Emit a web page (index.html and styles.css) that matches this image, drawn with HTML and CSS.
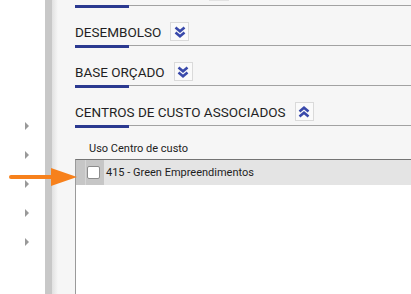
FILE: index.html
```html
<!DOCTYPE html>
<html>

<head>
    <meta charset="utf-8">
    <title>Centros de custo</title>
    <link rel="stylesheet" href="styles.css">
</head>

<body>
    <div class="page">
        <div class="side_menu">
            <div class="menu_item"><span class="menu_arrow"></span></div>
            <div class="menu_item"><span class="menu_arrow"></span></div>
            <div class="menu_item"><span class="menu_arrow"></span></div>
            <div class="menu_item"><span class="menu_arrow"></span></div>
            <div class="menu_item"><span class="menu_arrow"></span></div>
        </div>
        <div class="side_bar"></div>

        <div class="main_panel">
            <div class="prev_tail"><span class="toggle_stub"></span></div>
            <div class="section_rule"><span class="rule_mark"></span><span class="rule_line"></span></div>

            <div class="section_head">
                <span class="section_title">DESEMBOLSO</span>
                <button class="toggle">
                    <svg viewBox="0 0 12 12" width="12" height="12"><path d="M1.5 1.5 L6 5.2 L10.5 1.5 M1.5 6.5 L6 10.2 L10.5 6.5" /></svg>
                </button>
            </div>
            <div class="section_rule"><span class="rule_mark"></span><span class="rule_line"></span></div>

            <div class="section_head">
                <span class="section_title">BASE ORÇADO</span>
                <button class="toggle">
                    <svg viewBox="0 0 12 12" width="12" height="12"><path d="M1.5 1.5 L6 5.2 L10.5 1.5 M1.5 6.5 L6 10.2 L10.5 6.5" /></svg>
                </button>
            </div>
            <div class="section_rule"><span class="rule_mark"></span><span class="rule_line"></span></div>

            <div class="section_head">
                <span class="section_title">CENTROS DE CUSTO ASSOCIADOS</span>
                <button class="toggle">
                    <svg viewBox="0 0 12 12" width="12" height="12"><path d="M1.5 5.5 L6 1.8 L10.5 5.5 M1.5 10.5 L6 6.8 L10.5 10.5" /></svg>
                </button>
            </div>
            <div class="section_rule"><span class="rule_mark"></span><span class="rule_line"></span></div>

            <div class="grid_head">Uso Centro de custo</div>
            <div class="grid">
                <div class="grid_row">
                    <span class="cell_marker"></span>
                    <span class="cell_check"><span class="check_box"></span></span>
                    <span class="cell_text">415 - Green Empreendimentos</span>
                </div>
            </div>
        </div>
    </div>

    <!-- callout arrow pointing at the row -->
    <svg class="pointer_arrow" viewBox="0 0 72 24" width="72" height="24">
        <line x1="3" y1="11" x2="46" y2="11" stroke="#f7811c" stroke-width="4" stroke-linecap="round" />
        <polygon points="43,2 69,11 43,20" fill="#f7811c" />
    </svg>
</body>

</html>
```

FILE: styles.css
```css
html, body {
    margin: 0;
    height: 100%;
}

body {
    font-family: Roboto, "Liberation Sans", sans-serif;
    color: #222;
    background: #fff;
    overflow: hidden;
}

.page {
    display: flex;
    height: 100vh;
}

.side_menu {
    width: 45px;
    background: #fff;
    padding-top: 111px;
    box-sizing: border-box;
}

.menu_item {
    height: 29px;
    display: flex;
    align-items: center;
    padding-left: 25px;
}

.menu_arrow {
    width: 0;
    height: 0;
    border-top: 4px solid transparent;
    border-bottom: 4px solid transparent;
    border-left: 4px solid #999;
}

.side_bar {
    width: 7px;
    background: #c8c8c8;
}

.main_panel {
    flex: 1;
    display: flex;
    flex-direction: column;
    padding-left: 23px;
    background: linear-gradient(90deg, #e1e1e1 0px, #f6f6f6 6px);
    background-color: #f6f6f6;
}

.prev_tail {
    height: 5px;
    display: flex;
}

.toggle_stub {
    margin-left: 134px;
    width: 20px;
    height: 1px;
    background: #e2e2e2;
}

.section_rule {
    display: flex;
    height: 3px;
}

.rule_mark {
    width: 54px;
    background: #2b3990;
}

.rule_line {
    flex: 1;
    border-top: 1px solid #a2a2a2;
}

.section_head {
    display: flex;
    align-items: center;
    gap: 9px;
    height: 37px;
    padding-top: 14px;
    padding-bottom: 4px;
    box-sizing: border-box;
}

.section_title {
    font-size: 13.5px;
    color: #1f1f24;
    line-height: 19px;
    padding-top: 1px;
}

.toggle {
    width: 19px;
    height: 19px;
    padding: 0;
    margin: 0;
    border: 1px solid #dadada;
    background: #fafafa;
    display: flex;
    align-items: center;
    justify-content: center;
}

.toggle svg path {
    fill: none;
    stroke: #3949ab;
    stroke-width: 2.6;
}

.grid_head {
    height: 31px;
    padding-top: 14px;
    padding-left: 14px;
    box-sizing: border-box;
    font-size: 11px;
    line-height: 13px;
    color: #222;
}

.grid {
    flex: 1;
    background: #fff;
    border-left: 1px solid #9a9a9a;
    border-top: 1px solid #747474;
}

.grid_row {
    display: flex;
    align-items: center;
    height: 25px;
    background: #e4e4e4;
}

.cell_marker {
    width: 9px;
    height: 100%;
    background: #c6c6c6;
    border-right: 1px solid #d6d6d6;
}

.cell_check {
    width: 18px;
    height: 100%;
    background: #c6c6c6;
    display: flex;
    align-items: center;
}

.check_box {
    width: 11px;
    height: 11px;
    margin-left: 1px;
    background: #fff;
    border: 1px solid #8c8c8c;
    border-radius: 2px;
}

.cell_text {
    padding-left: 2px;
    font-size: 11px;
    color: #1e1e1e;
}

.pointer_arrow {
    position: absolute;
    left: 8px;
    top: 166px;
}
```
